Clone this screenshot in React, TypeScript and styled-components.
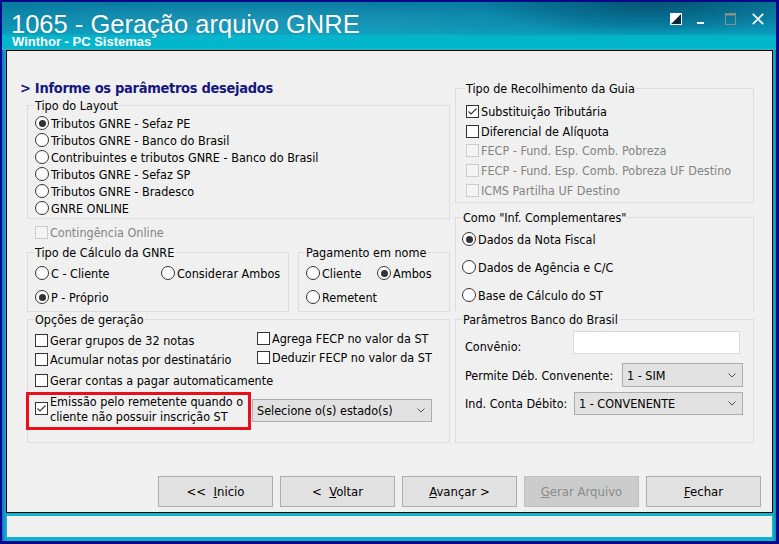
import React from "react";
import styled, { createGlobalStyle } from "styled-components";

const UI_FONT = `"DejaVu Sans Condensed", "DejaVu Sans", "Liberation Sans", sans-serif`;
const TITLE_FONT = `"Liberation Sans", Arial, sans-serif`;

const GlobalStyle = createGlobalStyle`
  html, body { margin: 0; padding: 0; background: #f0f0f0; }
  body {
    font-family: ${UI_FONT};
    font-stretch: condensed;
    font-size: 12.5px;
    color: #000;
  }
  * { box-sizing: border-box; }
`;

/* ---------- window chrome ---------- */

const Window = styled.div`
  width: 779px;
  height: 544px;
  display: flex;
  padding: 2px 3px 3px 2px;
  background: #07078a;
`;

const Frame = styled.div`
  flex: 1;
  display: flex;
  flex-direction: column;
  padding-bottom: 4px;
  background: linear-gradient(
    90deg,
    #1c6cc0 0,
    #139fd4 3px,
    #0db4cc 6px,
    #0db4cc calc(100% - 3px),
    #0a8ea8 100%
  );
`;

const TitleBar = styled.div`
  height: 48px;
  flex: none;
  display: flex;
  justify-content: space-between;
  padding: 0 12px 0 10px;
  color: #fff;
  background:
    radial-gradient(ellipse 230px 46px at 650px 0px, rgba(2, 50, 80, 0.55), transparent 75%),
    radial-gradient(ellipse 420px 26px at 260px 20px, rgba(120, 220, 240, 0.18), transparent 80%),
    linear-gradient(
      180deg,
      #087c9f 0px,
      #0a8bad 22px,
      #0a9cbc 32px,
      #02b4ca 34px,
      #00b6cc 46px,
      #3fb0b8 47px,
      #00b6cc 48px
    );
`;

const TitleText = styled.div`
  display: flex;
  flex-direction: column;
  padding-top: 11px;
  font-family: ${TITLE_FONT};
  font-stretch: normal;
  white-space: nowrap;
`;

const AppName = styled.div`
  font-size: 25.5px;
  line-height: 22px;
  margin-left: -1px;
  text-shadow: 0 0 1px rgba(0, 40, 60, 0.35);
`;

const Vendor = styled.div`
  font-size: 13px;
  font-weight: bold;
  line-height: 13px;
`;

const WindowControls = styled.div`
  display: flex;
  align-items: flex-start;
  padding-top: 11px;
`;

const Ctl = styled.span<{ $ml?: number }>`
  display: block;
  margin-left: ${p => p.$ml ?? 0}px;
  line-height: 0;
`;

const Panel = styled.div`
  flex: 1;
  display: flex;
  flex-direction: column;
  margin: 0 3px 0 4px;
  border: 1px solid #000;
  background: #f0f0f0;
`;

const StatusBar = styled.div`
  height: 21px;
  flex: none;
  margin: 3px 4px 0 5px;
  background: #f0f0f0;
  box-shadow: inset 0 1px 0 #fafafa;
`;

/* ---------- form layout ---------- */

const Columns = styled.div`
  display: flex;
  padding-left: 13px;
`;

const LeftCol = styled.div`
  width: 430px;
  display: flex;
  flex-direction: column;
`;

const LeftBody = styled.div`
  margin-left: 7px;
  display: flex;
  flex-direction: column;
`;

const RightCol = styled.div`
  width: 299px;
  margin-left: 5px;
  display: flex;
  flex-direction: column;
`;

const Heading = styled.div`
  margin-top: 28px;
  font-size: 14.5px;
  line-height: 18px;
  font-weight: bold;
  letter-spacing: -0.3px;
  color: #16167c;
  white-space: nowrap;
`;

const Group = styled.fieldset<{
  $h: number;
  $w?: number;
  $mt?: number;
  $pt?: number;
  $pl?: number;
  $open?: boolean;
}>`
  margin: ${p => p.$mt ?? 0}px 0 0 0;
  padding: ${p => p.$pt ?? 0}px 0 0 ${p => p.$pl ?? 6}px;
  border: 1px solid #dcdcdc;
  ${p => p.$open && "border-bottom-color: transparent;"}
  width: ${p => (p.$w ? `${p.$w}px` : "auto")};
  height: ${p => p.$h}px;
  min-width: 0;
  display: flex;
  flex-direction: column;
`;

const Legend = styled.legend`
  margin: 0;
  padding: 0 1px;
  line-height: 15px;
  white-space: nowrap;
`;

const Row = styled.div<{ $gap?: number; $mt?: number }>`
  display: flex;
  gap: ${p => p.$gap ?? 0}px;
  margin-top: ${p => p.$mt ?? 0}px;
`;

const Stack = styled.div<{ $w?: number; $pt?: number }>`
  display: flex;
  flex-direction: column;
  width: ${p => (p.$w ? `${p.$w}px` : "auto")};
  padding-top: ${p => p.$pt ?? 0}px;
`;

const OptionGrid = styled.div<{ $col: number }>`
  display: grid;
  grid-template-columns: ${p => p.$col}px auto;
`;

const Option = styled.label<{ $h?: number; $disabled?: boolean; $pl?: number; $mt?: number }>`
  display: flex;
  align-items: center;
  gap: 2px;
  height: ${p => p.$h ?? 17}px;
  margin-top: ${p => p.$mt ?? 0}px;
  padding-left: ${p => p.$pl ?? 1}px;
  color: ${p => (p.$disabled ? "#838383" : "#000")};
  white-space: nowrap;
`;

const RadioMark = styled.span<{ $on?: boolean }>`
  width: 14px;
  height: 14px;
  flex: none;
  border-radius: 50%;
  border: 1px solid #333;
  background: #fff;
  display: flex;
  align-items: center;
  justify-content: center;
  &::after {
    content: "";
    width: 7px;
    height: 7px;
    border-radius: 50%;
    background: #333;
    display: ${p => (p.$on ? "block" : "none")};
  }
`;

const CheckMark = styled.span<{ $disabled?: boolean }>`
  width: 13px;
  height: 13px;
  flex: none;
  border: 1px solid ${p => (p.$disabled ? "#cccccc" : "#333")};
  background: ${p => (p.$disabled ? "#f4f4f4" : "#fff")};
  display: flex;
  align-items: center;
  justify-content: center;
  line-height: 0;
`;

const Highlight = styled.div`
  width: 225px;
  height: 38px;
  margin: 1.5px 0 0 -8px;
  border: 3px solid #e8101a;
  display: flex;
  align-items: center;
  gap: 2px;
  padding: 0 0 3px 6px;
  line-height: 15px;
`;

const SelectBox = styled.div<{ $w: number; $h: number; $mr?: number; $mt?: number; $ml?: number }>`
  width: ${p => p.$w}px;
  height: ${p => p.$h}px;
  flex: none;
  margin: ${p => p.$mt ?? 0}px ${p => p.$mr ?? 0}px 0 ${p => p.$ml ?? 0}px;
  border: 1px solid #adadad;
  background: #e1e1e1;
  display: flex;
  align-items: center;
  justify-content: space-between;
  padding: 0 6px 0 4px;
  white-space: nowrap;
`;

const TextInput = styled.div<{ $w: number; $h: number; $mr?: number }>`
  width: ${p => p.$w}px;
  height: ${p => p.$h}px;
  margin-right: ${p => p.$mr ?? 0}px;
  border: 1px solid #dadada;
  background: #fff;
`;

const Field = styled.div<{ $h: number; $mt?: number; $align?: string }>`
  height: ${p => p.$h}px;
  margin-top: ${p => p.$mt ?? 0}px;
  display: flex;
  align-items: ${p => p.$align ?? "center"};
  justify-content: space-between;
`;

const FieldLabel = styled.span`
  padding-left: 3px;
  line-height: 15px;
  white-space: nowrap;
`;

const ButtonBar = styled.div`
  margin-top: auto;
  display: flex;
  justify-content: flex-end;
  gap: 7px;
  padding: 0 11px 5px 0;
`;

const Button = styled.button`
  width: 115px;
  height: 31px;
  border: 1px solid #adadad;
  background: #e1e1e1;
  font: inherit;
  font-size: 13px;
  color: #000;
  white-space: pre;
  padding: 0;
  &:disabled {
    border-color: #bfbfbf;
    background: #cccccc;
    color: #8a8a8a;
  }
`;

/* ---------- small drawings ---------- */

const Chevron = () => (
  <svg width="8" height="5" viewBox="0 0 8 5">
    <polyline points="0.5,0.5 4,4 7.5,0.5" fill="none" stroke="#505050" strokeWidth="1" />
  </svg>
);

const Tick = () => (
  <svg width="11" height="11" viewBox="0 0 11 11">
    <polyline points="1.5,5.5 4,8 9.5,2.5" fill="none" stroke="#333" strokeWidth="1.1" />
  </svg>
);

function Radio({ on, children, ...rest }: { on?: boolean; children: React.ReactNode; $h?: number; $pl?: number }) {
  return (
    <Option {...rest}>
      <RadioMark $on={on} />
      {children}
    </Option>
  );
}

function Check({
  on,
  disabled,
  children,
  ...rest
}: {
  on?: boolean;
  disabled?: boolean;
  children: React.ReactNode;
  $h?: number;
  $pl?: number;
  $mt?: number;
}) {
  return (
    <Option $disabled={disabled} {...rest}>
      <CheckMark $disabled={disabled}>{on && <Tick />}</CheckMark>
      {children}
    </Option>
  );
}

const layouts = [
  "Tributos GNRE - Sefaz PE",
  "Tributos GNRE - Banco do Brasil",
  "Contribuintes e tributos GNRE - Banco do Brasil",
  "Tributos GNRE - Sefaz SP",
  "Tributos GNRE - Bradesco",
  "GNRE ONLINE",
];

const recolhimento = [
  { label: "Substituição Tributária", on: true },
  { label: "Diferencial de Alíquota" },
  { label: "FECP - Fund. Esp. Comb. Pobreza", disabled: true },
  { label: "FECP - Fund. Esp. Comb. Pobreza UF Destino", disabled: true },
  { label: "ICMS Partilha UF Destino", disabled: true },
];

const complementares = ["Dados da Nota Fiscal", "Dados de Agência e C/C", "Base de Cálculo do ST"];

export default function App() {
  return (
    <>
      <GlobalStyle />
      <Window>
        <Frame>
          <TitleBar>
            <TitleText>
              <AppName>1065 - Geração arquivo GNRE</AppName>
              <Vendor>Winthor - PC Sistemas</Vendor>
            </TitleText>
            <WindowControls>
              <Ctl>
                <svg width="12" height="12" viewBox="0 0 12 12">
                  <rect x="0.5" y="0.5" width="11" height="11" fill="#0d2a38" stroke="#fff" />
                  <polygon points="0,0 12,0 0,12" fill="#fff" />
                </svg>
              </Ctl>
              <Ctl $ml={15}>
                <svg width="7" height="12" viewBox="0 0 7 12">
                  <rect x="0" y="9" width="7" height="2" fill="#fff" />
                </svg>
              </Ctl>
              <Ctl $ml={21}>
                <svg width="11" height="12" viewBox="0 0 11 12">
                  <rect x="0.5" y="0.5" width="10" height="11" fill="none" stroke="#8c8c8c" />
                  <rect x="0" y="0" width="11" height="2.5" fill="#8c8c8c" />
                </svg>
              </Ctl>
              <Ctl $ml={16}>
                <svg width="12" height="12" viewBox="0 0 12 12">
                  <path d="M0.8 0.8 L11.2 11.2 M11.2 0.8 L0.8 11.2" stroke="#fff" strokeWidth="1.7" />
                </svg>
              </Ctl>
            </WindowControls>
          </TitleBar>

          <Panel>
            <Columns>
              <LeftCol>
                <Heading>&gt; Informe os parâmetros desejados</Heading>
                <LeftBody>
                  <Group $h={121} $mt={1} $pt={1.5}>
                    <Legend>Tipo do Layout</Legend>
                    {layouts.map((l, i) => (
                      <Radio key={l} on={i === 0}>
                        {l}
                      </Radio>
                    ))}
                  </Group>

                  <Check disabled $pl={8} $mt={4.5}>
                    Contingência Online
                  </Check>

                  <Row $gap={9} $mt={4}>
                    <Group $w={262} $h={67} $pt={1.5}>
                      <Legend>Tipo de Cálculo da GNRE</Legend>
                      <OptionGrid $col={126}>
                        <Radio $h={24}>C - Cliente</Radio>
                        <Radio $h={24}>Considerar Ambos</Radio>
                        <Radio $h={24} on>
                          P - Próprio
                        </Radio>
                      </OptionGrid>
                    </Group>
                    <Group $w={152} $h={67} $pt={1.5}>
                      <Legend>Pagamento em nome</Legend>
                      <OptionGrid $col={71}>
                        <Radio $h={24}>Cliente</Radio>
                        <Radio $h={24} on>
                          Ambos
                        </Radio>
                        <Radio $h={24}>Remetent</Radio>
                      </OptionGrid>
                    </Group>
                  </Row>

                  <Group $h={131} $mt={0.5}>
                    <Legend>Opções de geração</Legend>
                    <Row>
                      <Stack $w={222} $pt={4}>
                        <Check $h={19}>Gerar grupos de 32 notas</Check>
                        <Check $h={19}>Acumular notas por destinatário</Check>
                        <Check $h={19} $mt={2}>
                          Gerar contas a pagar automaticamente
                        </Check>
                      </Stack>
                      <Stack $pt={2}>
                        <Check $h={19}>Agrega FECP no valor da ST</Check>
                        <Check $h={19}>Deduzir FECP no valor da ST</Check>
                      </Stack>
                    </Row>
                    <Row>
                      <Highlight>
                        <CheckMark style={{ marginBottom: 1 }}>
                          <Tick />
                        </CheckMark>
                        <span>
                          Emissão pelo remetente quando o
                          <br />
                          cliente não possuir inscrição ST
                        </span>
                      </Highlight>
                      <SelectBox $w={180} $h={23} $mt={9} $ml={1}>
                        <span>Selecione o(s) estado(s)</span>
                        <Chevron />
                      </SelectBox>
                    </Row>
                  </Group>
                </LeftBody>
              </LeftCol>

              <RightCol>
                <Group $h={122} $mt={30} $pt={6} $pl={9}>
                  <Legend>Tipo de Recolhimento da Guia</Legend>
                  {recolhimento.map(r => (
                    <Check key={r.label} $h={19.6} on={r.on} disabled={r.disabled}>
                      {r.label}
                    </Check>
                  ))}
                </Group>

                <Group $h={102.5} $mt={6.5} $pt={0.5} $open>
                  <Legend>Como "Inf. Complementares"</Legend>
                  {complementares.map((c, i) => (
                    <Radio key={c} $h={28} $pl={0} on={i === 0}>
                      {c}
                    </Radio>
                  ))}
                </Group>

                <Group $h={131} $mt={-0.5} $pt={4.5}>
                  <Legend>Parâmetros Banco do Brasil</Legend>
                  <Field $h={23} $align="flex-end">
                    <FieldLabel>Convênio:</FieldLabel>
                    <TextInput $w={167} $h={23} $mr={13} />
                  </Field>
                  <Field $h={24} $mt={9}>
                    <FieldLabel>Permite Déb. Convenente:</FieldLabel>
                    <SelectBox $w={121} $h={24} $mr={10}>
                      <span>1 - SIM</span>
                      <Chevron />
                    </SelectBox>
                  </Field>
                  <Field $h={23} $mt={5}>
                    <FieldLabel>Ind. Conta Débito:</FieldLabel>
                    <SelectBox $w={169} $h={23} $mr={10}>
                      <span>1 - CONVENENTE</span>
                      <Chevron />
                    </SelectBox>
                  </Field>
                </Group>
              </RightCol>
            </Columns>

            <ButtonBar>
              <Button>
                {"<<  "}
                <u>I</u>nicio
              </Button>
              <Button>
                {"<  "}
                <u>V</u>oltar
              </Button>
              <Button>
                <u>A</u>vançar &gt;
              </Button>
              <Button disabled>
                <u>G</u>erar Arquivo
              </Button>
              <Button>
                <u>F</u>echar
              </Button>
            </ButtonBar>
          </Panel>

          <StatusBar />
        </Frame>
      </Window>
    </>
  );
}
